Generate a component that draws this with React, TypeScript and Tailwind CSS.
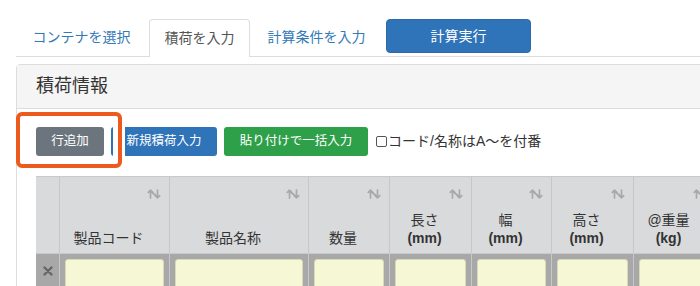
import React from "react";

const FONT = '"Liberation Sans", "Noto Sans CJK JP", sans-serif';

function SortIcon() {
  return (
    <svg width="14" height="10" viewBox="0 0 14 10" className="absolute top-[12px] right-[8px]" fill="none" stroke="#a9a9ab" strokeWidth="1.7" strokeLinecap="round" strokeLinejoin="round">
      <path d="M3.5 9 L3.5 1.2 M1.3 3.4 L3.5 1.2 L5.7 3.4" />
      <path d="M10.5 1 L10.5 8.8 M8.3 6.6 L10.5 8.8 L12.7 6.6" />
      <path d="M4.5 3 L9.5 7" />
    </svg>
  );
}

type Col = { w: number; lines: string[]; boldSecond?: boolean };

const cols: Col[] = [
  { w: 110, lines: ["製品コード"] },
  { w: 139, lines: ["製品名称"] },
  { w: 81, lines: ["数量"] },
  { w: 82, lines: ["長さ", "(mm)"], boldSecond: true },
  { w: 80, lines: ["幅", "(mm)"], boldSecond: true },
  { w: 82, lines: ["高さ", "(mm)"], boldSecond: true },
  { w: 82, lines: ["@重量", "(kg)"], boldSecond: true },
];

export default function App() {
  return (
    <div className="relative w-[700px] h-[286px] overflow-hidden bg-white text-[#333]" style={{ fontFamily: FONT }}>
      <div className="pl-4 pt-[19px] w-[1000px]">
        {/* Tabs */}
        <div className="flex items-start border-b border-[#dddddd] h-[38px]">
          <div className="w-[131px] h-[37px] flex items-center justify-center text-[14px] text-[#337ab7] mr-[2px]">コンテナを選択</div>
          <div className="w-[101px] h-[38px] -mb-px flex items-center justify-center text-[14px] text-[#555] bg-white border border-b-0 border-[#dddddd] rounded-t-[4px] mr-[2px]">積荷を入力</div>
          <div className="w-[129px] h-[37px] flex items-center justify-center text-[14px] text-[#337ab7]">計算条件を入力</div>
          <div className="ml-[5px] w-[145px] h-[34px] flex items-center justify-center text-[14px] text-white bg-[#2f73b8] border border-[#2c6aa9] rounded-[4px]">計算実行</div>
        </div>

        {/* Card */}
        <div className="mt-[7px] border border-[#dddddd] rounded-t-[4px]">
          <div className="h-[44px] bg-[#f5f5f5] border-b border-[#dddddd] flex items-center pl-[19px] text-[18px] text-[#333]">積荷情報</div>
          <div className="pt-[18px] pl-[19px] h-[200px]">
            <div className="flex items-center h-[29px]">
              <div className="w-[68px] h-[29px] flex items-center justify-center rounded-[3px] bg-[#6c757d] text-white text-[12.5px]">行追加</div>
              <div className="ml-[7px] w-[106px] h-[29px] flex items-center justify-center rounded-[3px] bg-[#2f73b8] text-white text-[12.5px]">新規積荷入力</div>
              <div className="ml-[7px] w-[144px] h-[29px] flex items-center justify-center rounded-[3px] bg-[#2fa04a] text-white text-[12.5px]">貼り付けで一括入力</div>
              <div className="ml-[8px] flex items-center text-[14px] text-[#333]">
                <span className="inline-block w-[11px] h-[11px] border border-[#555] rounded-[2px] bg-white mr-[1px]" />
                <span>コード/名称はA〜を付番</span>
              </div>
            </div>

            {/* Table */}
            <div className="mt-[20px] border-t border-[#c8c9cb]">
              <div className="flex">
                <div className="w-[23px] h-[76px] bg-[#d9dadc] shrink-0" />
                {cols.map((c, i) => (
                  <div key={i} className="relative shrink-0 h-[76px] bg-[#d9dadc] border-l border-[#c6c7c9] flex flex-col justify-end items-center pb-[6px] pl-2 pr-5 text-[14px] leading-[18px] text-[#333]" style={{ width: c.w }}>
                    <SortIcon />
                    {c.lines.map((l, j) => (
                      <span key={j} className={j === 1 && c.boldSecond ? "font-bold" : ""}>{l}</span>
                    ))}
                  </div>
                ))}
              </div>
              <div className="flex border-t border-[#c9c9c9]">
                <div className="w-[23px] h-[40px] bg-[#a8a8a8] shrink-0 flex items-start justify-center pt-[12px]">
                  <svg width="10" height="10" viewBox="0 0 10 10" stroke="#666" strokeWidth="2.4" strokeLinecap="round">
                    <path d="M1.5 1.5 L8.5 8.5 M8.5 1.5 L1.5 8.5" />
                  </svg>
                </div>
                {cols.map((c, i) => (
                  <div key={i} className="shrink-0 h-[40px] bg-[#a8a8a8] border-l border-[#c8c8c8] pt-[5px] pl-[5px] pr-[5px]" style={{ width: c.w }}>
                    <div className="h-[30px] rounded-[3px] bg-[#f6f7d5] border border-[#d9dab8]" />
                  </div>
                ))}
              </div>
            </div>
          </div>
        </div>
      </div>

      {/* Annotation overlay */}
      <div className="absolute left-[113px] top-[127px] w-[12px] h-[29px] bg-white" />
      <div className="absolute left-[16px] top-[112px] w-[106px] h-[56px] border-4 border-[#ec5a1d] rounded-[6px]" />
    </div>
  );
}
